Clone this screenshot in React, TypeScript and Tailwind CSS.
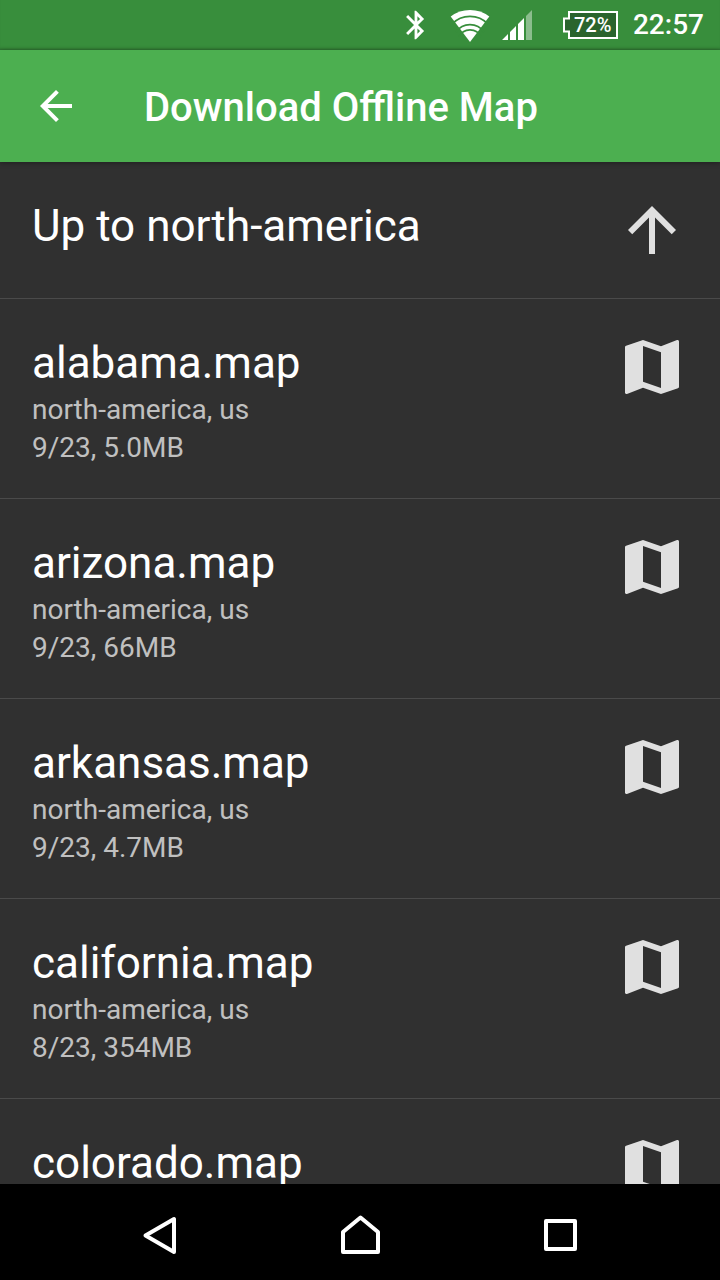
const maps = [
  { name: 'alabama.map', region: 'north-america, us', info: '9/23, 5.0MB' },
  { name: 'arizona.map', region: 'north-america, us', info: '9/23, 66MB' },
  { name: 'arkansas.map', region: 'north-america, us', info: '9/23, 4.7MB' },
  { name: 'california.map', region: 'north-america, us', info: '8/23, 354MB' },
  { name: 'colorado.map', region: 'north-america, us', info: '9/23, 68MB' },
];

function StatusBar() {
  return (
    <div className="flex h-[50px] shrink-0 items-center justify-end bg-[#388e3c] pr-4 text-white shadow-[inset_0_-3px_3px_-2px_rgba(0,0,0,0.25)]">
      <svg className="mr-[17px] h-[34px] w-[34px]" viewBox="0 0 24 24" fill="currentColor">
        <path d="M17.71 7.71L12 2h-1v7.59L6.41 5 5 6.41 10.59 12 5 17.59 6.41 19 11 14.41V22h1l5.71-5.71-4.3-4.29 4.3-4.29zM13 5.83l1.88 1.88L13 9.59V5.83zm1.88 10.46L13 18.17v-3.76l1.88 1.88z" />
      </svg>
      <svg className="mr-3 h-[34px] w-10" viewBox="0 0 40 34">
        <path d="M20 34L0.7 8.5A32 32 0 0 1 39.3 8.5Z" fill="white" />
        <g fill="none" stroke="#388e3c" strokeWidth="1.7">
          <path d="M2 16A25 25 0 0 1 38 16" />
          <path d="M6 24A17 17 0 0 1 34 24" />
          <path d="M9 29A12 12 0 0 1 31 29" />
        </g>
      </svg>
      <svg className="mr-[31px] h-[30px] w-[30px]" viewBox="0 0 30 30" fill="white">
        <path d="M0 30L6 24V30ZM8 22L14 16V30H8ZM16 14L22 8V30H16Z" />
        <path d="M24 6L30 0V30H24Z" opacity="0.42" />
      </svg>
      <div className="relative mr-[15px] h-7 w-[55px]">
        <svg className="h-7 w-[55px]" viewBox="0 0 55 28">
          <path d="M6 1H54V27H6V20.5H1V7.5H6Z" fill="#2a642d" stroke="white" strokeWidth="2" />
        </svg>
        <span className="absolute top-0 left-[11px] text-[20px] leading-7 font-medium">72%</span>
      </div>
      <span className="text-[28px] leading-none font-medium">22:57</span>
    </div>
  );
}

function Header() {
  return (
    <header className="relative flex h-28 shrink-0 items-center bg-[#4caf50] pl-8 text-white shadow-[0_1px_5px_rgba(0,0,0,0.35)]">
      <svg className="h-12 w-12" viewBox="0 0 24 24" fill="currentColor">
        <path d="M20 11H7.83l5.59-5.59L12 4l-8 8 8 8 1.41-1.41L7.83 13H20v-2z" />
      </svg>
      <h1 className="ml-16 pt-1 text-[40px] leading-[48px] font-medium">Download Offline Map</h1>
    </header>
  );
}

function MapIcon() {
  return (
    <svg className="h-[72px] w-[72px] shrink-0" viewBox="0 0 24 24" fill="#e0e0e0">
      <path d="M20.5 3l-.16.03L15 5.1 9 3 3.36 4.9c-.21.07-.36.25-.36.48V20.5c0 .28.22.5.5.5l.16-.03L9 18.9l6 2.1 5.64-1.9c.21-.07.36-.25.36-.48V3.5c0-.28-.22-.5-.5-.5zM15 19l-6-2.11V5l6 2.11V19z" />
    </svg>
  );
}

function NavBar() {
  return (
    <nav className="grid h-24 shrink-0 grid-cols-3 place-items-center bg-black px-[60px]">
      <svg className="h-12 w-12" viewBox="0 0 48 48" fill="none" stroke="white" strokeWidth="4" strokeLinejoin="round">
        <path d="M38 11V44L9.5 27.5Z" />
      </svg>
      <svg className="h-12 w-12" viewBox="0 0 48 48" fill="none" stroke="white" strokeWidth="4" strokeLinejoin="round">
        <path d="M7 24L24.5 9.5L42 24V44H7Z" />
      </svg>
      <svg className="h-12 w-12" viewBox="0 0 48 48" fill="none" stroke="white" strokeWidth="4" strokeLinejoin="round">
        <path d="M10 13H39V41H10Z" />
      </svg>
    </nav>
  );
}

export default function App() {
  return (
    <div className="flex h-screen w-full flex-col overflow-hidden bg-[#303030] font-['Roboto',sans-serif]">
      <StatusBar />
      <Header />
      <main className="min-h-0 flex-1 overflow-hidden">
        <div className="flex h-[137px] items-start justify-between border-b border-[#4a4a4a] px-8 pt-8">
          <h2 className="pt-1 text-[44px] leading-14 text-white">Up to north-america</h2>
          <svg className="h-[72px] w-[72px] shrink-0" viewBox="0 0 24 24" fill="#e0e0e0">
            <path d="M4 12l1.41 1.41L11 7.83V20h2V7.83l5.58 5.59L20 12l-8-8-8 8z" />
          </svg>
        </div>
        {maps.map((map) => (
          <div key={map.name} className="flex h-[200px] items-start justify-between border-b border-[#4a4a4a] px-8 pt-8">
            <div className="pt-1">
              <h2 className="text-[44px] leading-14 text-white">{map.name}</h2>
              <p className="text-[28px] leading-[38px] text-[#c0c0c0]">{map.region}</p>
              <p className="text-[28px] leading-[38px] text-[#c0c0c0]">{map.info}</p>
            </div>
            <MapIcon />
          </div>
        ))}
      </main>
      <NavBar />
    </div>
  );
}
